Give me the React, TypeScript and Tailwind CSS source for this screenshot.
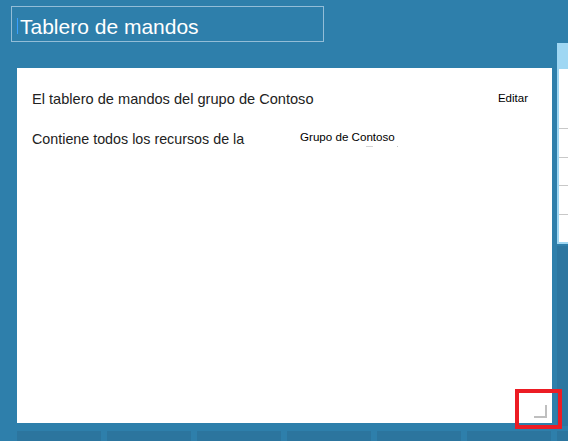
import React from 'react';

const tiles = [0, 1, 2, 3, 4, 5, 6];
const panelRows = [0, 1, 2, 3];

export default function App() {
  return (
    <div
      className="relative w-[568px] h-[441px] overflow-hidden bg-[#2e7fab] flex flex-col"
      style={{ fontFamily: '"Liberation Sans", Arial, sans-serif' }}
    >
      <div className="flex items-start">
        {/* Left column: title + card */}
        <div className="w-[552px] shrink-0 flex flex-col">
          <div className="mt-[6px] ml-[11px] w-[313px] h-[36px] border border-[#93bdd7] flex items-start pl-[5px] pt-[10px]">
            <span className="w-px h-[16px] mt-[1px] bg-[#3aa0ff]" />
            <span className="ml-[2px] text-[21px] leading-[20px] text-white">Tablero de mandos</span>
          </div>

          <div className="relative mt-[26px] ml-[17px] w-[535px] h-[355px] bg-white pt-[22px] pl-[15px] pr-[24px]">
            <div className="flex justify-between items-start">
              <span className="text-[14.6px] leading-[18px] text-[#222]">El tablero de mandos del grupo de Contoso</span>
              <span className="mt-[1px] text-[11.5px] leading-[15px] text-black">Editar</span>
            </div>
            <div className="flex items-start mt-[22px]">
              <span className="w-[268px] shrink-0 text-[14.3px] leading-[18px] text-[#222]">
                Contiene todos los recursos de la
              </span>
              <div className="flex flex-col -mt-[1px]">
                <span className="text-[11.6px] leading-[15px] text-black">Grupo de Contoso</span>
                <div className="flex mt-[2px]">
                  <span className="ml-[66px] w-[7px] h-px bg-[#d4d4d4]" />
                  <span className="ml-[24px] w-px h-px bg-[#c4c4c4]" />
                </div>
              </div>
            </div>
            <div className="absolute right-[5px] bottom-[5px] w-[13px] h-[13px] border-r-2 border-b-2 border-[#bfbfbf]" />
          </div>
        </div>

        {/* Right column: peeking panel */}
        <div className="ml-[5px] mt-[43px] w-[40px] shrink-0 flex flex-col">
          <div className="h-[26px] bg-[#9fd7f3]" />
          <div className="h-[175px] bg-white border-l-2 border-b-2 border-[#9fd7f3] pt-[59px] flex flex-col">
            {panelRows.map((r) => (
              <div key={r} className="h-[30px] border-t border-[#c8c8c8]" />
            ))}
          </div>
          <div className="mt-[2px] h-[180px] bg-[#2c76a0]" />
        </div>
      </div>

      {/* Bottom tiles */}
      <div className="flex gap-[6px] pl-[17px] mt-[5px]">
        {tiles.map((t) => (
          <div key={t} className="w-[84px] h-[20px] shrink-0 bg-[#2c759e]" />
        ))}
      </div>

      {/* Annotation */}
      <div className="absolute left-[515px] top-[389px] w-[47px] h-[40px] border-4 border-[#ec1c24]" />
    </div>
  );
}
